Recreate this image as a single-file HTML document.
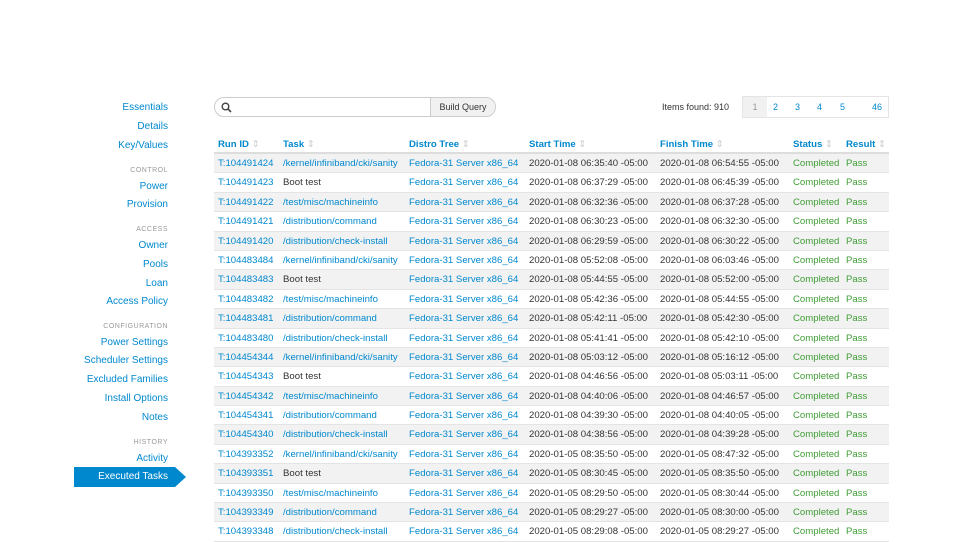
<!DOCTYPE html><html><head><style>
body{margin:0;width:960px;height:540px;background:#fff;font-family:"Liberation Sans",sans-serif;font-size:9.6px;color:#333;position:relative;overflow:hidden}
.s{position:absolute;right:792px;color:#0088ce;font-size:10px;white-space:nowrap;line-height:12px}
.h{position:absolute;right:792px;color:#999;font-size:7px;letter-spacing:.5px;line-height:10px}
.act{position:absolute;left:74px;top:467px;width:101px;height:20px;background:#0088ce;color:#fff;text-align:right;line-height:20px;box-sizing:border-box;padding-right:7px;font-size:10px}
.act:after{content:"";position:absolute;right:-11px;top:0;border-left:11px solid #0088ce;border-top:10px solid transparent;border-bottom:10px solid transparent}
.tb{position:absolute;left:214px;top:136px;width:675px}
.r{position:relative;height:19.4px;line-height:19px;border-bottom:1px solid #e4e4e4;box-sizing:border-box;white-space:nowrap}
.r span{position:absolute;top:0}
.hd{height:18px;line-height:17px;border-bottom:2px solid #ddd;color:#0088ce;font-weight:bold}
.hd i{color:#ccc;font-weight:normal;font-style:normal}
.o{background:#f2f2f2}
.l{color:#0088ce}.g{color:#3f9c35}
</style></head><body>
<div class="s" style="top:102px">Essentials</div><div class="s" style="top:121px">Details</div><div class="s" style="top:140px">Key/Values</div>
<div class="h" style="top:166px">CONTROL</div><div class="s" style="top:181px">Power</div><div class="s" style="top:199px">Provision</div>
<div class="h" style="top:225px">ACCESS</div><div class="s" style="top:240px">Owner</div><div class="s" style="top:259px">Pools</div><div class="s" style="top:278px">Loan</div><div class="s" style="top:296px">Access Policy</div>
<div class="h" style="top:322px">CONFIGURATION</div><div class="s" style="top:337px">Power Settings</div><div class="s" style="top:355px">Scheduler Settings</div><div class="s" style="top:374px">Excluded Families</div><div class="s" style="top:393px">Install Options</div><div class="s" style="top:412px">Notes</div>
<div class="h" style="top:438px">HISTORY</div><div class="s" style="top:453px">Activity</div>
<div class="act">Executed Tasks</div>
<div style="position:absolute;left:214px;top:97px;width:282px;height:20px;border:1px solid #ccc;border-radius:10px;box-sizing:border-box;overflow:hidden">
<svg style="position:absolute;left:6px;top:4px" width="11" height="11"><circle cx="4.5" cy="4.5" r="3.3" fill="none" stroke="#444" stroke-width="1.4"/><path d="M7 7L10 10" stroke="#444" stroke-width="1.6"/></svg>
<div style="position:absolute;left:215px;top:0;right:0;bottom:0;background:#f1f1f1;border-left:1px solid #ccc;text-align:center;line-height:18px;font-size:9px">Build Query</div></div>
<div style="position:absolute;left:662px;top:102px;font-size:9px">Items found: 910</div>
<div style="position:absolute;left:742px;top:96px;width:147px;height:22px;background:#fff;border:1px solid #e4e4e4;box-sizing:border-box;font-size:9px;color:#0088ce;line-height:20px">
<span style="position:absolute;left:0;width:24px;height:20px;background:#f1f1f1;text-align:center;color:#999">1</span>
<span style="position:absolute;left:30px">2</span><span style="position:absolute;left:52px">3</span><span style="position:absolute;left:74px">4</span><span style="position:absolute;left:97px">5</span><span style="position:absolute;left:129px">46</span></div>
<div class="tb" id="b"></div>
<script>
var X=[4,69,195,315,446,579,632];
var R=[["104491424","k","08 06:35:40","08 06:54:55"],["104491423","b","08 06:37:29","08 06:45:39"],["104491422","m","08 06:32:36","08 06:37:28"],["104491421","c","08 06:30:23","08 06:32:30"],["104491420","i","08 06:29:59","08 06:30:22"],["104483484","k","08 05:52:08","08 06:03:46"],["104483483","b","08 05:44:55","08 05:52:00"],["104483482","m","08 05:42:36","08 05:44:55"],["104483481","c","08 05:42:11","08 05:42:30"],["104483480","i","08 05:41:41","08 05:42:10"],["104454344","k","08 05:03:12","08 05:16:12"],["104454343","b","08 04:46:56","08 05:03:11"],["104454342","m","08 04:40:06","08 04:46:57"],["104454341","c","08 04:39:30","08 04:40:05"],["104454340","i","08 04:38:56","08 04:39:28"],["104393352","k","05 08:35:50","05 08:47:32"],["104393351","b","05 08:30:45","05 08:35:50"],["104393350","m","05 08:29:50","05 08:30:44"],["104393349","c","05 08:29:27","05 08:30:00"],["104393348","i","05 08:29:08","05 08:29:27"]];
var T={k:"/kernel/infiniband/cki/sanity",b:"Boot test",m:"/test/misc/machineinfo",c:"/distribution/command",i:"/distribution/check-install"};
function row(cells,cls){var s='<div class="r '+cls+'">';cells.forEach(function(c,i){s+='<span style="left:'+X[i]+'px" class="'+c[1]+'">'+c[0]+'</span>'});return s+'</div>';}
var H=["Run ID","Task","Distro Tree","Start Time","Finish Time","Status","Result"];
var h=row(H.map(function(t){return [t+' <i>⇕</i>','']}),'hd');
R.forEach(function(r,n){h+=row([['T:'+r[0],'l'],[T[r[1]],r[1]=="b"?'':'l'],['Fedora-31 Server x86_64','l'],['2020-01-'+r[2]+' -05:00',''],['2020-01-'+r[3]+' -05:00',''],['Completed','g'],['Pass','g']],n%2?'':'o')});
document.getElementById("b").innerHTML=h;
</script>
</body></html>
